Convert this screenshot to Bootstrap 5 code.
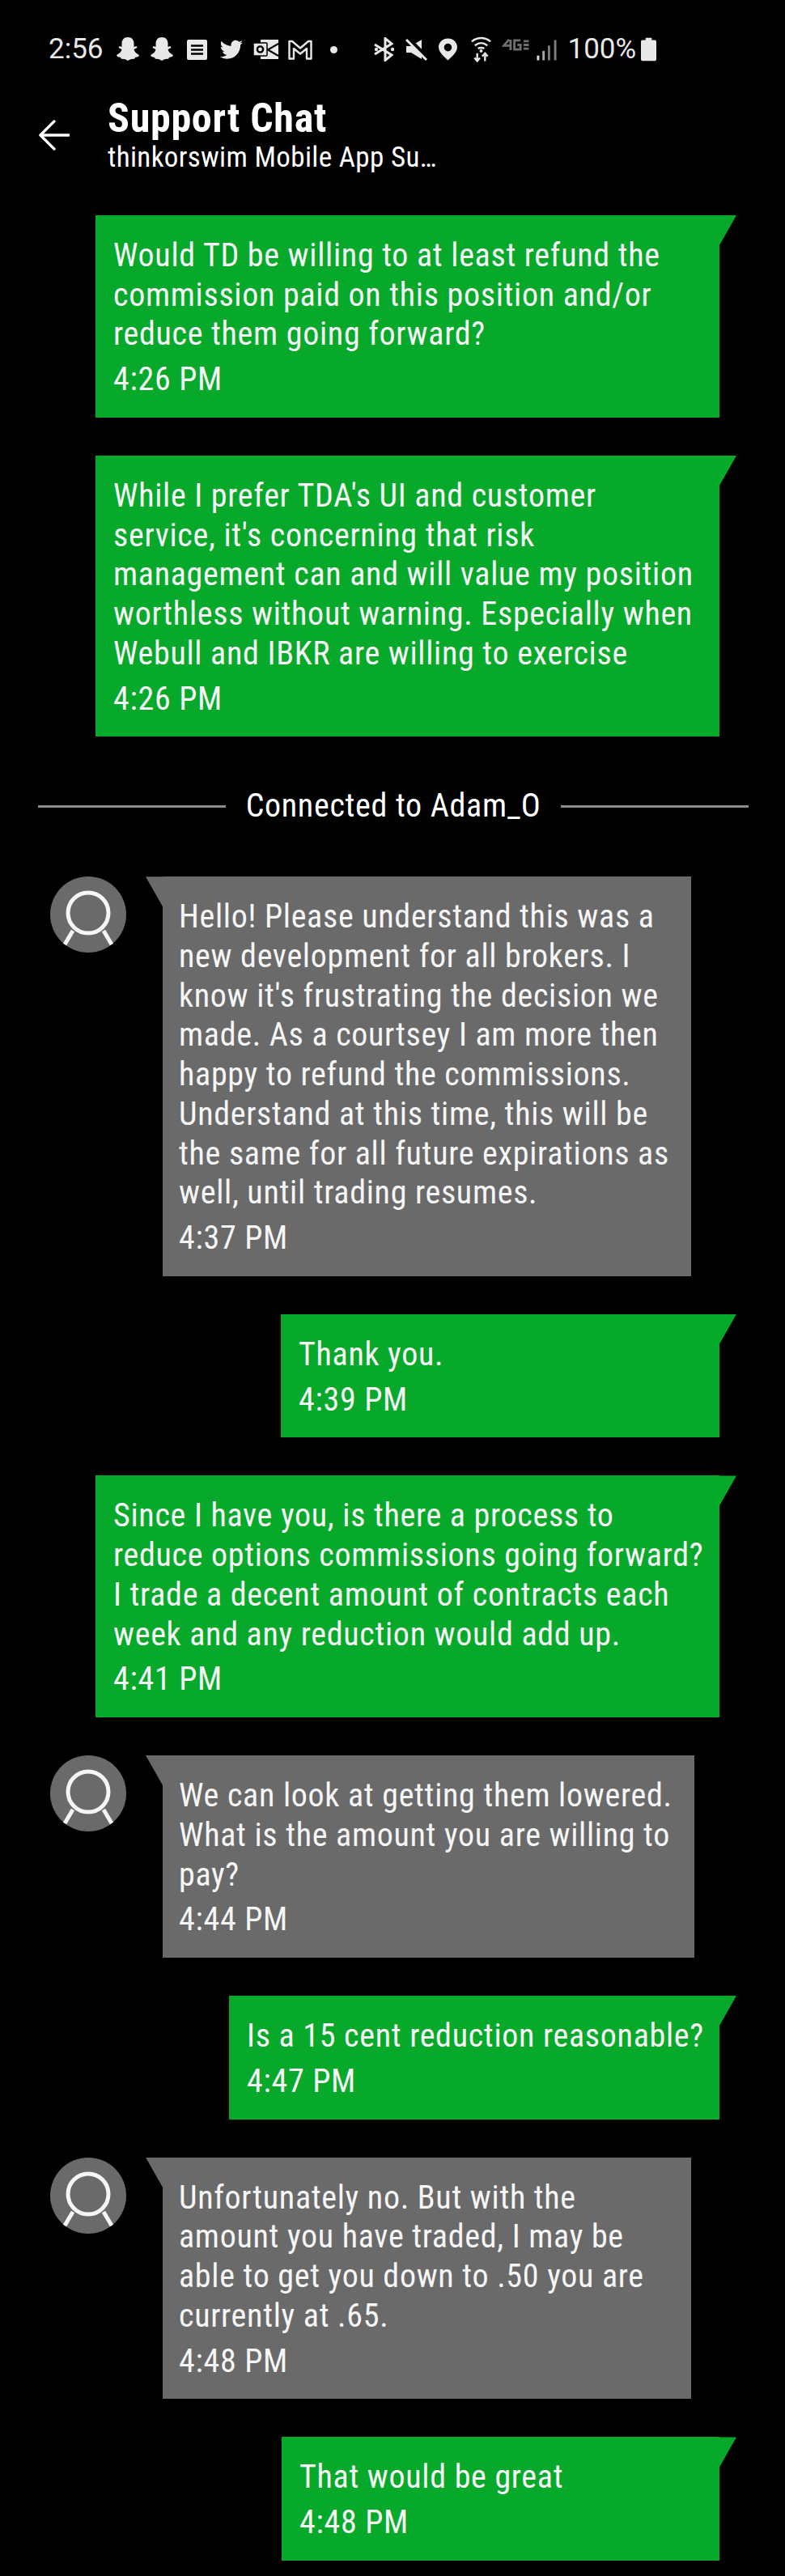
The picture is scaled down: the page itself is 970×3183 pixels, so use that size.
<!DOCTYPE html>
<html lang="en">
<head>
    <meta charset="UTF-8">
    <meta name="viewport" content="width=device-width, initial-scale=1.0">
    <title>Support Chat</title>
    <link href="https://cdn.jsdelivr.net/npm/bootstrap@5.3.0/dist/css/bootstrap.min.css" rel="stylesheet">
    <style>
        body {
            background-color: #000;
            color: #fff;
            font-family: "Roboto Condensed", "Liberation Sans Narrow", Roboto, sans-serif;
            font-stretch: 75%;
            width: 970px;
            height: 3183px;
            overflow: hidden;
        }
        .status-bar {
            height: 48px;
            margin-top: 37px;
            padding-left: 60px;
            font-family: Roboto, sans-serif;
            font-stretch: normal;
            font-size: 35px;
            color: #e8e8e8;
        }
        .status-bar svg { display: block; flex: none; }
        .si-snap1 { margin-left: 15px; }
        .si-snap2 { margin-left: 12px; }
        .si-doc { margin-left: 16px; }
        .si-bird { margin-left: 15px; }
        .si-mail { margin-left: 12px; }
        .si-gmail { margin-left: 12px; }
        .si-dot { margin-left: 22px; }
        .si-bt { margin-left: 45px; }
        .si-mute { margin-left: 13px; }
        .si-pin { margin-left: 14px; }
        .si-wifi { margin-left: 17px; }
        .si-net { margin-left: 13px; margin-top: -12px; }
        .si-bars { margin-left: 8px; }
        .si-pct { margin-left: 14px; }
        .si-batt { margin-left: 6px; }
        .chat-head { margin-top: 33px; }
        .back-btn { width: 133px; padding-left: 48px; }
        .chat-title { font-size: 50px; font-weight: 700; line-height: 56px; letter-spacing: .7px; }
        .chat-sub { font-size: 35px; line-height: 42px; letter-spacing: .35px; }
        .chat-log { margin-top: 50px; gap: 47.2px; }
        .msg-out, .msg-in {
            position: relative;
            font-size: 40px;
            line-height: 48.7px;
            letter-spacing: .7px;
            color: #f6f6f6;
            padding: 26px 22px 22px;
            white-space: nowrap;
        }
        .msg-out { background-color: #07a92b; margin-left: auto; margin-right: 81px; }
        .msg-in { background-color: #6a6a6a; margin-left: 201px; padding-left: 20px; }
        .msg-time { margin-top: 7px; }
        .msg-out::after, .msg-in::before {
            content: "";
            position: absolute;
            top: 0;
            width: 21px;
            height: 37px;
            background-color: inherit;
        }
        .msg-out::after { left: 100%; clip-path: polygon(0 0, 100% 0, 0 100%); }
        .msg-in::before { right: 100%; clip-path: polygon(0 0, 100% 0, 100% 100%); }
        .w-771 { width: 771px; }
        .w-542 { width: 542px; }
        .w-607 { width: 606px; }
        .w-540 { width: 541px; }
        .w-653 { width: 653px; }
        .w-657 { width: 657px; }
        .agent-row { position: relative; }
        .agent-face {
            position: absolute;
            left: 62px;
            top: 0;
            width: 94px;
            height: 94px;
        }
        .sep-line { height: 3px; background-color: #8c8c8c; flex: 1; }
        .sep-row {
            margin: 15px 45px 15px 47px;
            gap: 25px;
            font-size: 40px;
            line-height: 48.7px;
            letter-spacing: .7px;
        }
    </style>
</head>
<body>
    <div class="status-bar d-flex align-items-center">
        <span>2:56</span>
        <svg class="si-snap1" width="30" height="30" viewBox="0 0 30 30"><path fill="#e8e8e8" d="M15 0c5 0 7.500 3.500 7.500 8v4l3-1 1 2-4 2c.5 3 3 5 6.500 7l-1 2-4 1-1 2c-3-.5-5 .5-8 2-3-1.500-5-2.500-8-2l-1-2-4-1-1-2c3.500-2 6-4 6.500-7l-4-2 1-2 3 1V8C7.500 3.500 10 0 15 0z"/></svg>
        <svg class="si-snap2" width="30" height="30" viewBox="0 0 30 30"><path fill="#e8e8e8" d="M15 0c5 0 7.500 3.500 7.500 8v4l3-1 1 2-4 2c.5 3 3 5 6.500 7l-1 2-4 1-1 2c-3-.5-5 .5-8 2-3-1.500-5-2.500-8-2l-1-2-4-1-1-2c3.500-2 6-4 6.500-7l-4-2 1-2 3 1V8C7.500 3.500 10 0 15 0z"/></svg>
        <svg class="si-doc" width="25" height="25" viewBox="0 0 25 25"><rect width="25" height="25" rx="2" fill="#e8e8e8"/><path stroke="#000" stroke-width="2.400" d="M5 7.500h15M5 12.500h15M5 17.500h15"/></svg>
        <svg class="si-bird" width="30" height="26" viewBox="0 0 32 26"><path fill="#e8e8e8" d="M31 4c-1 .5-2 .8-3.500 1 1.200-.8 2.200-2 2.600-3.400-1.200.7-2.500 1.200-3.900 1.500C25 1.800 23.400 1 21.600 1c-3.400 0-6.200 2.800-6.200 6.200 0 .5 0 1 .2 1.400C10.400 8.300 5.800 5.900 2.800 2c-.5.900-.8 2-.8 3.100 0 2.200 1.100 4.100 2.800 5.200-1 0-2-.3-2.800-.8v.1c0 3 2.100 5.500 5 6.100-.5.1-1.100.2-1.600.2-.4 0-.8 0-1.200-.1.800 2.500 3.100 4.300 5.800 4.300-2.100 1.700-4.800 2.700-7.700 2.700-.5 0-1 0-1.500-.1C3.500 24.500 6.800 25.500 10.300 25.500c11.300 0 17.500-9.400 17.500-17.500v-.8c1.200-.9 2.300-2 3.200-3.200z"/></svg>
        <svg class="si-mail" width="31" height="26" viewBox="0 0 31 26"><rect x="9" y="1" width="22" height="24" fill="#e8e8e8"/><path fill="none" stroke="#000" stroke-width="2.200" d="M31 6L18 13.500 31 21"/><rect x="0" y="5" width="17" height="16" rx="1" fill="#e8e8e8" stroke="#000" stroke-width="1.500"/><circle cx="8.500" cy="13" r="3.600" fill="none" stroke="#000" stroke-width="2.400"/></svg>
        <svg class="si-gmail" width="30" height="25" viewBox="0 0 30 25"><path fill="none" stroke="#e8e8e8" stroke-width="2.400" stroke-linejoin="round" d="M1.500 23.500V2h3.500L15 10.500 25 2h3.500v21.500h-5.500V11l-8 6.500L7 11v12.500z"/></svg>
        <svg class="si-dot" width="9" height="9" viewBox="0 0 10 10"><circle cx="5" cy="5" r="5" fill="#e8e8e8"/></svg>
        <svg class="si-bt" width="26" height="30" viewBox="0 0 26 30"><path fill="none" stroke="#e8e8e8" stroke-width="3" d="M1 9l21 13-8 6.500V1.500L22 8 1 21"/><circle cx="3" cy="15" r="2.200" fill="#e8e8e8"/><circle cx="23" cy="15" r="2.200" fill="#e8e8e8"/></svg>
        <svg class="si-mute" width="27" height="27" viewBox="0 0 27 27"><path fill="#e8e8e8" d="M1 9h6L20 1v24L7 17H1z"/><path stroke="#000" stroke-width="6" d="M0-3l27 27"/><path stroke="#e8e8e8" stroke-width="3" d="M1 1l25 25"/></svg>
        <svg class="si-pin" width="23" height="28" viewBox="0 0 24 28"><path fill="#e8e8e8" fill-rule="evenodd" d="M12 0c6.600 0 12 5 12 11 0 7-8 13-12 17C8 24 0 18 0 11 0 5 5.400 0 12 0zm0 6.500a5 5 0 100 10 5 5 0 000-10z"/></svg>
        <svg class="si-wifi" width="25" height="32" viewBox="0 0 26 32"><path fill="none" stroke="#e8e8e8" stroke-width="2.500" d="M1 6c7-6 17-6 24 0M5 11c5-4 11-4 16 0M9 15c2-1.500 6-1.500 8 0"/><circle cx="13" cy="18" r="2" fill="#e8e8e8"/><path fill="none" stroke="#e8e8e8" stroke-width="2.500" d="M8 21v10M4.500 27l3.500 4 3.500-4M18 31V21M14.500 25l3.500-4 3.500 4"/></svg>
        <svg class="si-net" width="35" height="15" viewBox="0 0 36 16"><path fill="none" stroke="#6f6f6f" stroke-width="3" d="M9 1L2 9h10M11 1v14M24 2h-8v12h8V8h-4M28 3h7M28 8h7M28 13h7"/></svg>
        <svg class="si-bars" width="25" height="27" viewBox="0 0 26 27"><path stroke="#e0e0e0" stroke-width="3" d="M2 21v6"/><path stroke="#a8a8a8" stroke-width="3" d="M9 15v12"/><path stroke="#7c7c7c" stroke-width="3" d="M16 8v19M24 1v26"/></svg>
        <span class="si-pct">100%</span>
        <svg class="si-batt" width="19" height="30" viewBox="0 0 20 30"><path fill="#e8e8e8" d="M6 0h8v3h4a2 2 0 012 2v23a2 2 0 01-2 2H2a2 2 0 01-2-2V5a2 2 0 012-2h4z"/></svg>
    </div>

    <div class="chat-head d-flex align-items-center">
        <div class="back-btn">
            <svg class="d-block" width="38" height="38" viewBox="0 0 40 40"><path fill="none" stroke="#fff" stroke-width="3.500" stroke-linecap="round" stroke-linejoin="round" d="M20 2L2 20l18 18M3 20h36"/></svg>
        </div>
        <div>
            <div class="chat-title">Support Chat</div>
            <div class="chat-sub">thinkorswim Mobile App Su…</div>
        </div>
    </div>

    <div class="chat-log d-flex flex-column">
        <div class="msg-out w-771">Would TD be willing to at least refund the<br>commission paid on this position and/or<br>reduce them going forward?<div class="msg-time">4:26 PM</div></div>
        <div class="msg-out w-771">While I prefer TDA's UI and customer<br>service, it's concerning that risk<br>management can and will value my position<br>worthless without warning. Especially when<br>Webull and IBKR are willing to exercise<div class="msg-time">4:26 PM</div></div>
        <div class="sep-row d-flex align-items-center">
            <div class="sep-line"></div>
            <div>Connected to Adam_O</div>
            <div class="sep-line"></div>
        </div>
        <div class="agent-row">
            <svg class="agent-face" viewBox="0 0 94 94"><circle cx="47" cy="47" r="47" fill="#6a6a6a"/><circle cx="47" cy="45" r="25" fill="none" stroke="#f6f6f6" stroke-width="5"/><path fill="none" stroke="#f6f6f6" stroke-width="5" d="M28 67L18 84M66 67l10 17"/></svg>
            <div class="msg-in w-653">Hello! Please understand this was a<br>new development for all brokers. I<br>know it's frustrating the decision we<br>made. As a courtsey I am more then<br>happy to refund the commissions.<br>Understand at this time, this will be<br>the same for all future expirations as<br>well, until trading resumes.<div class="msg-time">4:37 PM</div></div>
        </div>
        <div class="msg-out w-542">Thank you.<div class="msg-time">4:39 PM</div></div>
        <div class="msg-out w-771">Since I have you, is there a process to<br>reduce options commissions going forward?<br>I trade a decent amount of contracts each<br>week and any reduction would add up.<div class="msg-time">4:41 PM</div></div>
        <div class="agent-row">
            <svg class="agent-face" viewBox="0 0 94 94"><circle cx="47" cy="47" r="47" fill="#6a6a6a"/><circle cx="47" cy="45" r="25" fill="none" stroke="#f6f6f6" stroke-width="5"/><path fill="none" stroke="#f6f6f6" stroke-width="5" d="M28 67L18 84M66 67l10 17"/></svg>
            <div class="msg-in w-657">We can look at getting them lowered.<br>What is the amount you are willing to<br>pay?<div class="msg-time">4:44 PM</div></div>
        </div>
        <div class="msg-out w-607">Is a 15 cent reduction reasonable?<div class="msg-time">4:47 PM</div></div>
        <div class="agent-row">
            <svg class="agent-face" viewBox="0 0 94 94"><circle cx="47" cy="47" r="47" fill="#6a6a6a"/><circle cx="47" cy="45" r="25" fill="none" stroke="#f6f6f6" stroke-width="5"/><path fill="none" stroke="#f6f6f6" stroke-width="5" d="M28 67L18 84M66 67l10 17"/></svg>
            <div class="msg-in w-653">Unfortunately no. But with the<br>amount you have traded, I may be<br>able to get you down to .50 you are<br>currently at .65.<div class="msg-time">4:48 PM</div></div>
        </div>
        <div class="msg-out w-540">That would be great<div class="msg-time">4:48 PM</div></div>
    </div>
    <script src="https://cdn.jsdelivr.net/npm/bootstrap@5.3.0/dist/js/bootstrap.bundle.min.js"></script>
</body>
</html>
